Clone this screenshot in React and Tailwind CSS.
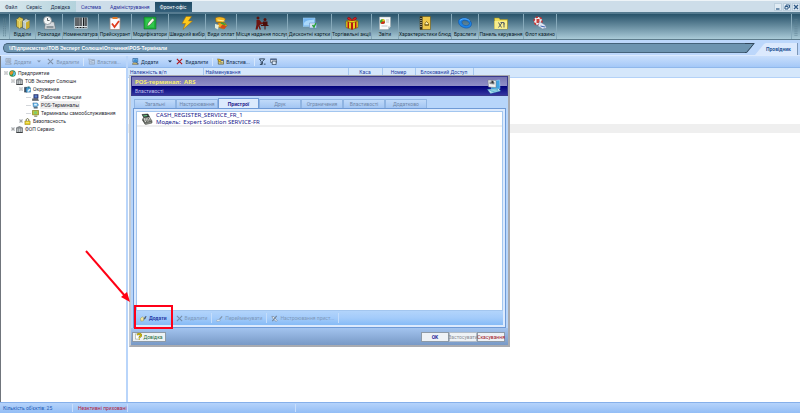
import React, { useState } from 'react';
import clsx from 'clsx';

function RibbonIcon({ name }) {
  return (
    <svg className="w-[14px] h-[14px]" viewBox="0 0 28 28" fill="none">
      {name === 'departments' && (
        <>
          <path d="M1 7l6-5 7 3v16l-7 4-6-4z" fill="#d8c24c" stroke="#4a4312" />
          <path d="M1 7l6 3 7-4M7 10v15" stroke="#f6ec9a" />
          <path d="M13 10l7-5 7 4v14l-7 4-7-3z" fill="#b9c6c4" stroke="#33403f" />
          <path d="M13 10l7 3 7-4M20 13v14" stroke="#f2f7f5" />
          <path d="M20 13l7-4v14l-7 4z" fill="#c9ad2e" />
        </>
      )}
      {name === 'schedule' && (
        <>
          <path d="M7 12h17l3 14H5z" fill="#d5dade" stroke="#646d73" />
          <path d="M9 20h14v4H9z" fill="#8b969c" />
          <circle cx="11" cy="9" r="8" fill="#f4f6f6" stroke="#7d878d" strokeWidth="1.5" />
          <path d="M11 4v5h4" stroke="#30373b" strokeWidth="1.5" />
        </>
      )}
      {name === 'barcode' && (
        <>
          <path d="M1 3h26v22H1z" fill="#dfe5e8" />
          <path d="M4 3v17M8 3v17M14 3v17M19 3v17M24 3v17" stroke="#15191c" strokeWidth="2.5" />
          <path d="M11 3v17M21.5 3v17" stroke="#15191c" />
          <path d="M3 23h22" stroke="#15191c" strokeWidth="2" strokeDasharray="2 1" />
        </>
      )}
      {name === 'price' && (
        <>
          <path d="M4 4h20v23H4z" fill="#fbfbfd" stroke="#9a8a82" strokeWidth="1.5" />
          <path d="M9 2h10v4H9z" fill="#e07a28" />
          <path d="M8 15l5 7 9-12" stroke="#e03a1c" strokeWidth="3.5" />
        </>
      )}
      {name === 'modifiers' && (
        <>
          <path d="M2 2h24v24H2z" fill="#1fae3c" stroke="#0c6b22" />
          <path d="M5 5h17v18H5z" fill="#2fc94a" />
          <path d="M8 21l2-7 9-10 4 4-9 10z" fill="#f5f6e8" stroke="#20522a" />
        </>
      )}
      {name === 'quick' && (
        <path d="M12 1h11l-6 9h8L6 27l5-12H4z" fill="#ffc91c" stroke="#a06a06" />
      )}
      {name === 'payment' && (
        <>
          <path d="M3 4c6-4 16-2 20 2l-5 7-14-1z" fill="#f5b822" stroke="#8f5a08" />
          <path d="M7 8l14 2" stroke="#fff0a0" strokeWidth="2" />
          <path d="M8 14l13-1 5 6-7 7-11-4z" fill="#f2a71b" stroke="#8f5a08" />
          <path d="M2 16l8 2-2 9-6-3z" fill="#e3ecd8" />
          <path d="M17 17l8 3-4 6-9-3z" fill="#d24a1c" />
          <path d="M15 12l9 4-2 3-9-4z" fill="#3e9f35" />
        </>
      )}
      {name === 'places' && (
        <>
          <circle cx="6" cy="4" r="3" fill="#5c120c" />
          <path d="M3 8h6l4 5 6-1v3l-8 2-2 2 3 8H9l-2-7-2 7H1l2-10z" fill="#6e1510" />
          <circle cx="20" cy="7" r="3" fill="#5c120c" />
          <path d="M16 11h9v7h-9zM12 18h15v2h-6v7h-2v-7h-7z" fill="#4b0e0a" />
        </>
      )}
      {name === 'discount' && (
        <>
          <path d="M0 4h24v17H0z" fill="#73b4ef" stroke="#a8d4f5" />
          <path d="M2 14c6-8 12-5 20-7v12H2z" fill="#a9d8fb" />
          <path d="M13 14h14v10H13z" fill="#d3e2f4" stroke="#5a85bc" />
          <path d="M19 18l3 4 4-8" stroke="#29a13a" strokeWidth="3" />
        </>
      )}
      {name === 'gift' && (
        <>
          <path d="M2 10l12-4 12 4v13l-12 4-12-4z" fill="#e8d21e" stroke="#59500a" />
          <path d="M2 10l12 4 12-4" stroke="#8f8210" strokeWidth="1.5" />
          <path d="M12 13h4v14h-4zM5 11l3 1v13l-3-1zM20 12l3-1v13l-3 1z" fill="#b41616" />
          <path d="M14 9C10-1 2 3 6 7c2 2 5 2 8 2zM14 9c4-10 12-6 8-2-2 2-5 2-8 2z" fill="#d32020" stroke="#6d0808" />
        </>
      )}
      {name === 'reports' && (
        <>
          <path d="M3 2h22v19l-5 6H3z" fill="#fafafa" stroke="#9ba5a9" />
          <circle cx="9" cy="11" r="5" fill="#39a42f" />
          <path d="M9 11V6a5 5 0 015 5z" fill="#f2c31b" />
          <path d="M9 11h5a5 5 0 01-5 5 5 5 0 01-4-2z" fill="#d8261a" />
          <path d="M16 8h6M16 12h6M7 20h12" stroke="#aab2b6" strokeWidth="1.5" />
          <path d="M25 21h-5v6z" fill="#c1c9cc" />
        </>
      )}
      {name === 'dishes' && (
        <>
          <path d="M4 1h21v26H4z" fill="#edc84c" stroke="#5d4708" />
          <path d="M4 1h5v26H4z" fill="#2c2a1c" />
          <path d="M6 4v20" stroke="#f7f0cc" strokeWidth="2" strokeDasharray="2 2" />
          <path d="M14 15l3-4 4 4v3h-7z" fill="#fff4b8" stroke="#6d5410" strokeWidth="1.5" />
          <path d="M13 18h9" stroke="#6d5410" strokeWidth="2" />
        </>
      )}
      {name === 'bracelets' && (
        <>
          <path
            d="M1 9c5-8 21-7 26 5 1 9-8 12-16 9C3 20 0 14 1 9zM8 11c-1 4 2 7 6 8s9-1 9-4c-1-6-12-9-15-4z"
            fill="#1f83e4"
            fillRule="evenodd"
            stroke="#0a4da0"
          />
          <path d="M4 9C9 4 18 5 23 9" stroke="#5bb0ff" strokeWidth="2" />
        </>
      )}
      {name === 'control' && (
        <>
          <path d="M1 4h9l2 3h15v19H1z" fill="#f1de58" stroke="#9c8817" />
          <path d="M1 10h25v16H1z" fill="#f9ee8c" />
          <path d="M9 13l6 10M17 12L9 23M13 13h7v4" stroke="#5a6265" strokeWidth="2" />
          <path d="M20 14v9" stroke="#5a6265" strokeWidth="2" />
        </>
      )}
      {name === 'casino' && (
        <>
          <circle cx="10" cy="10" r="8" fill="#f3eff0" stroke="#c13030" strokeWidth="3" strokeDasharray="5 3" />
          <path d="M7 6h6v8H7z" fill="#c8423f" />
          <path d="M13 11l11 7 3 6-8 2-9-6z" fill="#dfe7f3" stroke="#6c7f9f" />
          <path d="M15 20l9 2" stroke="#3f66b5" strokeWidth="2" />
        </>
      )}
    </svg>
  );
}

function SmallIcon({ name, className }) {
  return (
    <svg className={clsx('w-[7px] h-[7px] shrink-0', className)} viewBox="0 0 16 16" fill="none">
      {name === 'add' && (
        <>
          <path d="M2 1h11v8H2z" fill="#8fc3ee" stroke="#245c96" strokeWidth="1.5" />
          <circle cx="8" cy="6" r="4" fill="#3f8fd0" />
          <path d="M2 11h9l3 4H1z" fill="#d9c06a" stroke="#3b4c60" />
          <path d="M10 9l5 5" stroke="#274f7c" strokeWidth="2" />
        </>
      )}
      {name === 'delete' && <path d="M2 2l12 12M14 2L2 14" stroke="#b01218" strokeWidth="2.5" />}
      {name === 'props' && (
        <>
          <path d="M3 4h12v10H3z" fill="#f3e7a0" stroke="#4a4a30" strokeWidth="1.5" />
          <path d="M3 4h12v3H3z" fill="#4268b0" />
          <path d="M1 2l6 1 3 4-5 2z" fill="#f5c61c" stroke="#6b4e06" />
          <path d="M6 11h7" stroke="#4a4a30" strokeWidth="1.5" />
        </>
      )}
      {name === 'filter' && (
        <>
          <path d="M1 2h12L8 8v5H5V8z" stroke="#23374d" strokeWidth="2" />
          <path d="M2 15h6M11 14h4" stroke="#23374d" strokeWidth="2" />
        </>
      )}
      {name === 'window' && (
        <>
          <path d="M1 2h14v8H1z" fill="#fff" stroke="#3b4c60" strokeWidth="1.5" />
          <path d="M1 2h14v3H1z" fill="#506a94" />
          <path d="M5 7h9v8H5z" fill="#dce9f7" stroke="#1d2f45" strokeWidth="1.5" />
        </>
      )}
      {name === 'globe' && (
        <>
          <circle cx="8" cy="8" r="7" fill="#2fa052" stroke="#176034" />
          <path d="M2 5c4-4 7-3 8 0s-3 3-4 6-4-1-4-6z" fill="#e8902a" />
          <path d="M10 2c4 2 5 6 4 9l-5 3c-1-4 3-6 1-12z" fill="#58b9ee" />
        </>
      )}
      {name === 'building' && (
        <>
          <path d="M1 4l7-3 7 3v11H1z" fill="#8b9094" stroke="#3c4144" />
          <path d="M4 6v8M8 6v8M12 6v8" stroke="#e4e8ea" strokeWidth="1.5" />
          <path d="M1 15h14" stroke="#2b2f31" strokeWidth="2" />
        </>
      )}
      {name === 'env' && (
        <>
          <path d="M1 3h6v11H1z" fill="#3d4f63" stroke="#1d2833" />
          <path d="M5 4h10v10H5z" fill="#4aa7dd" stroke="#1f5f93" />
          <path d="M7 12l5-6 3 2-4 5z" fill="#f0f5f8" />
          <path d="M8 1h5v4H8z" fill="#2d7a8e" />
        </>
      )}
      {name === 'workstation' && (
        <>
          <path d="M4 1h10v9H4z" fill="#33408a" stroke="#191f4c" />
          <path d="M6 3h6v5H6z" fill="#5c86cd" />
          <path d="M1 11h12l2 4H1z" fill="#6a6f7b" stroke="#31343c" />
        </>
      )}
      {name === 'pos' && (
        <>
          <path d="M2 2h10l3 5-4 4H3z" fill="#5cb2ea" stroke="#2a5f8f" />
          <path d="M5 4h6v4H5z" fill="#e7f4fd" />
          <path d="M4 11h9v4H4z" fill="#5e7180" />
        </>
      )}
      {name === 'self' && (
        <>
          <path d="M1 1h14v10H1z" fill="#d8c030" stroke="#6f7a18" strokeWidth="1.5" />
          <path d="M4 3h8v6H4z" fill="#7fcf6a" />
          <path d="M5 13h7v2H5z" fill="#58602a" />
        </>
      )}
      {name === 'lock' && (
        <>
          <path d="M5 8V5c0-5 6-5 6 0v3" stroke="#5d5a2a" strokeWidth="2" />
          <path d="M2 7h12v8H2z" fill="#e9cf22" stroke="#7b6a08" />
          <path d="M4 10h8" stroke="#fff6a0" strokeWidth="1.5" />
        </>
      )}
      {name === 'plug' && (
        <>
          <path d="M1 8l4-4 4 3-1 6-6 1z" fill="#f4e89a" stroke="#8c8548" />
          <path d="M8 9l4-6 3-1-2 6-4 3z" fill="#55606c" />
        </>
      )}
      {name === 'rename' && (
        <>
          <path d="M1 12l6-2 3 3-8 2z" fill="#f0f4f8" stroke="#8193a8" />
          <path d="M7 9l6-7 2 2-6 7z" fill="#8193a8" />
        </>
      )}
      {name === 'tools' && (
        <>
          <path d="M2 3l5 1 7 9-2 2-8-7z" fill="#f0f4f8" stroke="#71849b" strokeWidth="1.5" />
          <path d="M13 2L3 14" stroke="#71849b" strokeWidth="2.5" />
        </>
      )}
      {name === 'help' && (
        <>
          <path d="M1 2h9v12H1z" fill="#fff" stroke="#6e7e70" />
          <path d="M6 5c0-5 9-4 8 1-1 3-4 2-4 5" stroke="#8a7a00" strokeWidth="4" />
          <path d="M6 5c0-5 9-4 8 1-1 3-4 2-4 5" stroke="#f4de1c" strokeWidth="2" />
          <circle cx="10" cy="14" r="1.5" fill="#c9b400" />
        </>
      )}
    </svg>
  );
}

const RIBBON = [
  { icon: 'departments', label: 'Відділи', width: 'w-[26px]' },
  { icon: 'schedule', label: 'Розклади', width: 'w-[27px]' },
  { icon: 'barcode', label: 'Номенклатура', width: 'w-[36px]' },
  { icon: 'price', label: 'Прейскурант', width: 'w-[33px]' },
  { icon: 'modifiers', label: 'Модифікатори', width: 'w-[37px]' },
  { icon: 'quick', label: 'Швидкий вибір', width: 'w-[37px]' },
  { icon: 'payment', label: 'Види оплат', width: 'w-[31px]' },
  { icon: 'places', label: 'Місця надання послуг', width: 'w-[51px]' },
  { icon: 'discount', label: 'Дисконтні картки', width: 'w-[44px]' },
  { icon: 'gift', label: 'Торгівельні акції', width: 'w-[40px]' },
  { icon: 'reports', label: 'Звіти', width: 'w-[27px]' },
  { icon: 'dishes', label: 'Характеристики блюд', width: 'w-[53px]' },
  { icon: 'bracelets', label: 'Браслети', width: 'w-[27px]' },
  { icon: 'control', label: 'Панель керування', width: 'w-[45px]' },
  { icon: 'casino', label: 'Флот казино', width: 'w-[33px]' },
];

const TREE = [
  { label: 'Предприятие', icon: 'globe', pad: 'pl-[2px]', mark: '-' },
  { label: 'ТОВ Эксперт Солюшн', icon: 'building', pad: 'pl-[9px]', mark: '-' },
  { label: 'Окружение', icon: 'env', pad: 'pl-[17px]', mark: '-' },
  { label: 'Рабочие станции', icon: 'workstation', pad: 'pl-[25px]' },
  { label: 'POS-Терминалы', icon: 'pos', pad: 'pl-[25px]', active: true },
  { label: 'Терминалы самообслуживания', icon: 'self', pad: 'pl-[25px]' },
  { label: 'Безопасность', icon: 'lock', pad: 'pl-[17px]', mark: '+' },
  { label: 'ФОП Сервио', icon: 'building', pad: 'pl-[9px]', mark: '+' },
];

const TABS = [
  { label: 'Загальні', width: 'w-[42px]' },
  { label: 'Настроювання', width: 'w-[42px]' },
  { label: 'Пристрої', width: 'w-[41px]' },
  { label: 'Друк', width: 'w-[42px]' },
  { label: 'Ограничения', width: 'w-[42px]' },
  { label: 'Властивості', width: 'w-[42px]' },
  { label: 'Додатково', width: 'w-[42px]' },
];

function MenuBar() {
  return (
    <nav className="flex h-[12px] items-stretch bg-[#cddde9] border-t border-[#eef4f8] leading-[10px]">
      <div className="flex w-[76px] items-center gap-[9px] pl-[5px] bg-linear-to-r from-[#dbe9ee] to-[#b3d2dc] text-[#1c2f4c]">
        <button>Файл</button>
        <button>Сервіс</button>
        <button>Довідка</button>
      </div>
      <button className="ml-[5px] text-[#2a2f9c]">Система</button>
      <button className="ml-[9px] text-[#2a2f9c]">Адміністрування</button>
      <button className="ml-[5px] mt-px w-[37px] bg-linear-to-b from-[#1f4a64] to-[#35617c] text-white">Фронт-офіс</button>
      <div className="ml-auto flex items-center gap-px">
        {['min', 'restore', 'close'].map(b => (
          <button key={b} aria-label={b} className="flex h-[8px] w-[8px] items-center justify-center bg-[#e0ebf3] border border-[#bccfdd]">
            <svg className="w-[6px] h-[6px] shrink-0" viewBox="0 0 12 12" fill="none" stroke="#2f5a86" strokeWidth="2.5">
              {b === 'min' && <path d="M2 10h7" />}
              {b === 'restore' && <path d="M4 4V2h7v5H9M2 5h6v5H2z" strokeWidth="2" />}
              {b === 'close' && <path d="M2 2l8 8M10 2l-8 8" />}
            </svg>
          </button>
        ))}
      </div>
    </nav>
  );
}

function Grip({ className }) {
  return (
    <svg className={clsx('shrink-0 w-[9px] h-full', className)} viewBox="0 0 9 27">
      <path d="M3.5 5v19M5.5 5v19" stroke="#5d7f90" strokeDasharray="1 1" />
    </svg>
  );
}

function Ribbon() {
  return (
    <div className="flex h-[28px] border-t-2 border-b border-t-[#557b90] border-b-[#5d7c8c] bg-linear-to-b from-[#28536a] to-[#aacbd8]">
      <Grip />
      {RIBBON.map(item => (
        <button
          key={item.icon}
          className={clsx('shrink-0 flex flex-col items-center pt-[2px] border-l border-[#86a9ba] text-[#0a1c28] leading-[8px] whitespace-nowrap', item.width)}
        >
          <RibbonIcon name={item.icon} />
          <span>{item.label}</span>
        </button>
      ))}
      <div className="flex-1 border-l border-[#86a9ba]" />
      <Grip className="border-l border-[#86a9ba]" />
    </div>
  );
}

function PathBar() {
  return (
    <div className="flex h-[16px] items-start bg-[#bcd7fb] pt-[3px] border-b border-[#dceafd]">
      <div className="ml-[3px] flex h-[10px] flex-1 items-center rounded-l-[5px] border-y border-l border-[#44627a] bg-[#6d94b0] pl-[5px] font-['Liberation_Sans',sans-serif] font-bold text-white">
        {'\\\\Підприємство\\ТОВ Эксперт Солюшн\\Оточення\\POS-Термінали'}
      </div>
      <svg className="h-[10px] w-[10px] shrink-0" viewBox="0 0 10 10">
        <path d="M0 0h10L2 10H0z" fill="#6d94b0" />
        <path d="M0 .5h9L1.500 9.500H0" fill="none" stroke="#33485c" />
      </svg>
      <div className="flex h-[12px]">
        <svg className="h-[12px] w-[11px]" viewBox="0 0 11 12">
          <path d="M11 0L9 1 0 12h11z" fill="#dbe9fd" />
        </svg>
        <button className="mr-[2px] w-[32px] border-r border-[#7c97b8] bg-[#dbe9fd] text-left font-bold text-[#1f5596]">Провідник</button>
      </div>
    </div>
  );
}

function ToolButton({ icon, label, disabled }) {
  return (
    <button disabled={disabled} className={clsx('flex items-center gap-[2px]', disabled ? 'text-[#7d93b0]' : 'text-[#16304e]')}>
      <SmallIcon name={icon} className={disabled ? 'opacity-40 grayscale' : ''} />
      {label && <span>{label}</span>}
    </button>
  );
}

function DropArrow({ className }) {
  return (
    <button aria-label="Ще" className={className}>
      <svg className="w-[4px] h-[3px]" viewBox="0 0 8 6"><path d="M0 1h8L4 5z" fill="currentColor" /></svg>
    </button>
  );
}

function Sidebar() {
  return (
    <aside className="flex w-[126px] shrink-0 flex-col border-l border-[#70757c] bg-white">
      <div className="flex h-[12px] items-center gap-[4px] border-b border-[#8fb8ec] bg-linear-to-b from-[#c9dffc] to-[#a4c8f7] pl-[4px]">
        <ToolButton icon="add" label="Додати" disabled />
        <DropArrow className="mx-[2px] text-[#7d93b0]" />
        <ToolButton icon="delete" label="Видалити" disabled />
        <div className="h-[8px] border-l border-[#d5e6fc]" />
        <ToolButton icon="props" label="Властив..." disabled />
      </div>
      <ul className="pt-px">
        {TREE.map((node, i) => (
          <li key={i} className={clsx('flex h-[8px] items-center gap-[1px] text-[#2b2b33]', node.pad)}>
            <span className="flex w-[5px] shrink-0 justify-center">
              {node.mark ? (
                <svg className="w-[4px] h-[4px]" viewBox="0 0 8 8" fill="none">
                  <path d="M.5.500h7v7h-7z" fill="#fff" stroke="#9aa2aa" />
                  <path d="M2 4h4" stroke="#333" />
                  {node.mark === '+' && <path d="M4 2v4" stroke="#333" />}
                </svg>
              ) : (
                <span className="h-px w-full bg-[#d3d6da]" />
              )}
            </span>
            <SmallIcon name={node.icon} />
            <span className={clsx('px-px leading-[8px]', node.active && 'bg-[#efefef]')}>{node.label}</span>
          </li>
        ))}
      </ul>
    </aside>
  );
}

function Content() {
  return (
    <main className="flex min-w-0 flex-1 flex-col bg-white">
      <div className="flex h-[12px] items-center gap-[4px] border-b border-[#8fb8ec] bg-linear-to-b from-[#c9dffc] to-[#a4c8f7] pl-[4px]">
        <ToolButton icon="add" label="Додати" />
        <DropArrow className="ml-[6px] text-[#16304e]" />
        <ToolButton icon="delete" label="Видалити" />
        <div className="h-[8px] border-l border-[#d5e6fc]" />
        <ToolButton icon="props" label="Властив..." />
        <div className="h-[8px] border-l border-[#d5e6fc]" />
        <ToolButton icon="filter" />
        <ToolButton icon="window" />
      </div>
      <table className="w-full table-fixed">
        <thead>
          <tr className="h-[9px] border-b border-[#b4d2f8] bg-[#d5e7fb] text-[#1f3c9c] leading-[8px]">
            <th className="w-[75px] border-r border-[#a6c8f0] pl-[2px] text-left font-normal">Належність в/п</th>
            <th className="w-[145px] border-r border-[#a6c8f0] pl-[2px] text-left font-normal">Найменування</th>
            <th className="w-[34px] border-r border-[#a6c8f0] text-center font-normal">Каса</th>
            <th className="w-[33px] border-r border-[#a6c8f0] text-center font-normal">Номер</th>
            <th className="w-[58px] border-r border-[#a6c8f0] text-center font-normal">Блокований Доступ</th>
            <th />
          </tr>
        </thead>
        <tbody>
          <tr className="h-[47px]"><td colSpan={6} /></tr>
          <tr className="h-[9px] bg-[#efefef]"><td colSpan={6} /></tr>
        </tbody>
      </table>
    </main>
  );
}

function Dialog() {
  const [tab, setTab] = useState('Пристрої');

  return (
    <section role="dialog" aria-label="POS-терминал: ARS" className="absolute left-[129px] top-[75px] flex h-[272px] w-[381px] flex-col border-2 border-t border-l-[#c4ccd6] border-[#a9abb0] bg-[#b7d5fa]">
      <header className="flex h-[20px] items-center justify-between border border-[#3a3a8c] bg-[linear-gradient(#7876b4,#918fc8_50%,#000078_50%,#3535a0)] pl-[3px] pr-[6px]">
        <div>
          <h1 className="font-['Noto_Sans',sans-serif] text-[6px] font-bold leading-[9px] text-[#f6ee6e]">POS-терминал:&nbsp; ARS</h1>
          <p className="leading-[8px] text-[#c3c4f0]">Властивості</p>
        </div>
        <svg className="h-[15px] w-[14px]" viewBox="0 0 28 30" fill="none">
          <path d="M7 5l18-3 1 17-17 2z" fill="#3fa4e2" stroke="#9fdcff" />
          <path d="M2 2l16 1v14L3 16z" fill="#f1f2f2" stroke="#6f767c" />
          <path d="M5 5l10 1v5L5 10z" fill="#878d92" />
          <path d="M9 3l4 1v5l-4-1z" fill="#303437" />
          <path d="M1 21l22-2 4 5-20 5z" fill="#d9f2fa" stroke="#2a93bd" />
          <path d="M5 23l17-2M7 26l16-3" stroke="#31a3c4" strokeWidth="1.5" />
        </svg>
      </header>

      <div className="flex flex-1 flex-col px-[2px] pt-[2px]">
        <div role="tablist" className="flex items-end pl-px">
          {TABS.map(t => (
            <button
              key={t.label}
              role="tab"
              aria-selected={tab === t.label}
              onClick={() => setTab(t.label)}
              className={clsx(
                'rounded-t-[1px] border border-b-0 leading-[8px]',
                t.width,
                tab === t.label
                  ? 'h-[10px] border-[#6f9ad6] bg-[#dceafd] font-bold text-[#24248c]'
                  : 'h-[9px] border-[#8fb4e2] bg-linear-to-b from-[#c0daf9] to-[#a3c6f3] text-[#6f86a8]'
              )}
            >
              {t.label}
            </button>
          ))}
        </div>

        <div className="flex flex-1 flex-col border border-[#6f9ad6] bg-[#dceafd] p-[2px]">
          <div className="flex flex-1 flex-col border border-[#a3c6ef] bg-white">
            <div className="flex h-[15px] items-center gap-[3px] border-b-2 border-[#efefef] pl-[4px] font-['Noto_Sans',sans-serif] text-[6px] leading-[7px] text-[#20208c]">
              <svg className="h-[12px] w-[12px] shrink-0" viewBox="0 0 24 24" fill="none">
                <path d="M2 3l12-1 3 6-11 2z" fill="#2e3a38" stroke="#151a19" />
                <path d="M4 5l8-1 1 2-7 1z" fill="#6fd08a" />
                <path d="M4 10l13-2 5 8-14 4z" fill="#d5d7d2" stroke="#33362f" />
                <path d="M8 12l9-1M9 15l10-2M10 17l10-2" stroke="#33362f" strokeWidth="1.500" strokeDasharray="2 1" />
                <path d="M4 10l4 10v3l-6-9z" fill="#4a4e49" />
                <path d="M8 20l14-4v4l-13 3z" fill="#8d918b" stroke="#33362f" />
              </svg>
              <div>
                <p>CASH_REGISTER_SERVICE_FR_1</p>
                <p>Модель:&nbsp; Expert Solution SERVICE-FR</p>
              </div>
            </div>
          </div>
          <div className="relative flex h-[14px] items-center gap-[4px] bg-linear-to-b from-[#b2d4fb] via-[#a3cbfa] to-[#86bbf6] pl-[4px] text-[#7e99ba]">
            <button className="flex items-center gap-[2px] font-bold text-[#2a3fa8]">
              <SmallIcon name="plug" />Додати
            </button>
            <div className="h-[10px] border-l border-[#c4ddfb]" />
            <button disabled className="flex items-center gap-[2px]"><SmallIcon name="delete" className="opacity-40 grayscale" />Видалити</button>
            <div className="h-[10px] border-l border-[#c4ddfb]" />
            <button disabled className="flex items-center gap-[2px]"><SmallIcon name="rename" />Перейменувати</button>
            <div className="h-[10px] border-l border-[#c4ddfb]" />
            <button disabled className="flex items-center gap-[2px]"><SmallIcon name="tools" />Настроювання прист...</button>
            <div className="h-[10px] border-l border-[#c4ddfb]" />
            <div className="absolute -left-[2px] -top-[6px] h-[24px] w-[39px] border-2 border-[#ff0018]" />
          </div>
        </div>
      </div>

      <footer className="flex h-[17px] items-center bg-linear-to-b from-[#a3c4ef] to-[#7899c6] pl-px pr-[3px]">
        <button className="flex h-[10px] w-[34px] items-center justify-center gap-px border border-[#8d9aa8] bg-[#eef2f4] text-[#1c6a3c]">
          <SmallIcon name="help" />Довідка
        </button>
        <div className="ml-auto flex">
          <button className="flex h-[10px] w-[28px] items-center justify-center border border-[#8d9aa8] bg-[#eef2f6] font-bold text-[#2a2f9c]">OK</button>
          <button disabled className="flex h-[10px] w-[28px] items-center justify-center border border-[#b2bcc8] bg-[#eef2f6] text-[#8b8f96]">Застосувати</button>
          <button className="flex h-[10px] w-[28px] items-center justify-center border border-[#8d9aa8] bg-[#eef2f6] text-[#a01828]">Скасування</button>
        </div>
      </footer>
    </section>
  );
}

export default function App() {
  return (
    <div className="relative flex min-h-screen flex-col overflow-hidden bg-white font-[Roboto,sans-serif] text-[5px] leading-[8px] whitespace-nowrap">
      <MenuBar />
      <Ribbon />
      <PathBar />
      <div className="flex flex-1">
        <Sidebar />
        <div className="w-[2px] shrink-0 border-x border-[#b9d5fa] bg-[#dceafd]" />
        <Content />
      </div>
      <footer className="flex h-[11px] items-center border-t border-[#86b0ea] bg-linear-to-b from-[#b5d3fb] to-[#93bdf5] text-[#1f5cb4]">
        <div className="w-[73px] border-r border-[#c8defc] pl-[3px]">Кількість об'єктів: 25</div>
        <div className="w-[55px] border-r border-[#c8defc] pl-[5px] text-[#b01c3c]">Неактивні приховані</div>
        <div className="h-[8px] w-[168px] border-r border-[#c8defc]" />
      </footer>

      <Dialog />

      {/* pointer to the add button */}
      <svg className="absolute left-[84px] top-[249px] h-[56px] w-[50px]" viewBox="0 0 50 56">
        <path d="M2 2l39 45" stroke="#ff0014" strokeWidth="2" />
        <path d="M46 53l-9-5 6-5z" fill="#ff0014" />
      </svg>
    </div>
  );
}
